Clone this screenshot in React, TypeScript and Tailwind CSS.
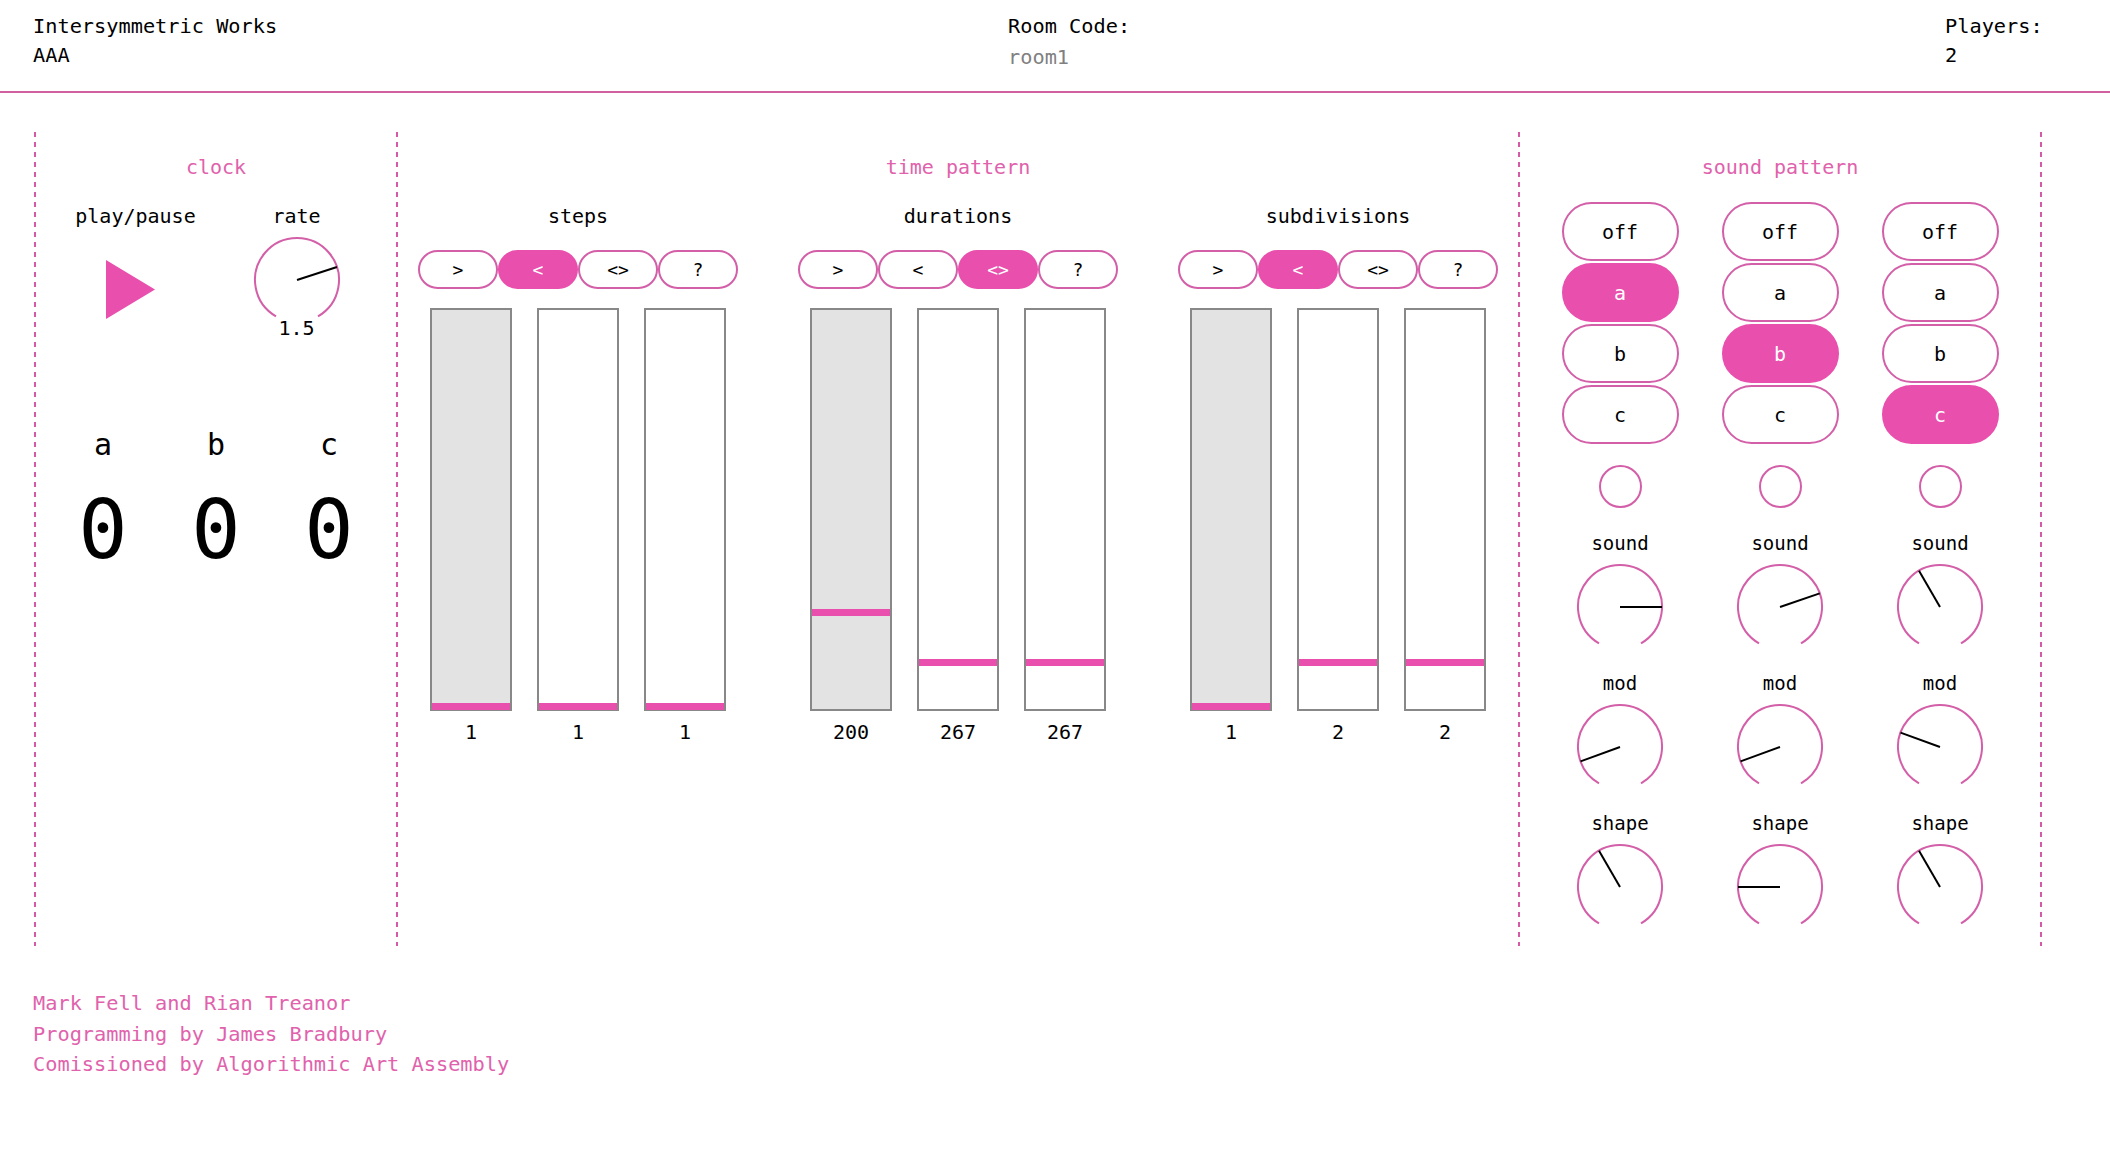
import React from "react";

const STROKE = "#d35fa8";

function Knob({ angle, size = 90, r = 42 }: { angle: number; size?: number; r?: number }) {
  const c = size / 2;
  const rad = (angle * Math.PI) / 180;
  const x2 = c + r * Math.cos(rad);
  const y2 = c - r * Math.sin(rad);
  const a1 = (120 * Math.PI) / 180;
  const a2 = (60 * Math.PI) / 180;
  const sx = c + r * Math.cos(a1);
  const sy = c + r * Math.sin(a1);
  const ex = c + r * Math.cos(a2);
  const ey = c + r * Math.sin(a2);
  return (
    <svg width={size} height={size} viewBox={`0 0 ${size} ${size}`} className="block">
      <path
        d={`M ${sx} ${sy} A ${r} ${r} 0 1 1 ${ex} ${ey}`}
        fill="none"
        stroke={STROKE}
        strokeWidth={2}
      />
      <line x1={c} y1={c} x2={x2} y2={y2} stroke="#000" strokeWidth={2} />
    </svg>
  );
}

function Divider() {
  return (
    <div className="w-[2px] shrink-0 self-stretch [background-image:repeating-linear-gradient(to_bottom,#d45aa8_0px,#d45aa8_5px,transparent_5px,transparent_10px)]" />
  );
}

function Title({ children }: { children: React.ReactNode }) {
  return <div className="h-[28px] leading-[28px] text-[20px] text-[#e062ac]">{children}</div>;
}

type Group = {
  label: string;
  active: number;
  markers: number[];
  values: string[];
};

const groups: Group[] = [
  { label: "steps", active: 1, markers: [393, 393, 393], values: ["1", "1", "1"] },
  { label: "durations", active: 2, markers: [299, 349, 349], values: ["200", "267", "267"] },
  { label: "subdivisions", active: 1, markers: [393, 349, 349], values: ["1", "2", "2"] },
];

const modes = [">", "<", "<>", "?"];

function PatternGroup({ g }: { g: Group }) {
  return (
    <div className="w-[319px] flex flex-col items-center">
      <div className="h-[28px] leading-[28px] text-[20px] mt-[1px]">{g.label}</div>
      <div className="flex mt-[20px]">
        {modes.map((m, i) => (
          <div
            key={m}
            className={
              i === g.active
                ? "w-[80px] h-[39px] rounded-full border-2 border-[#e94fad] bg-[#e94fad] text-white flex items-center justify-center text-[18px]"
                : "w-[80px] h-[39px] rounded-full border-2 border-[#d35fa8] bg-white text-black flex items-center justify-center text-[18px]"
            }
          >
            {m}
          </div>
        ))}
      </div>
      <div className="flex gap-[25px] mt-[19px]">
        {g.markers.map((top, i) => (
          <div key={i} className="flex flex-col items-center">
            <div
              className={
                i === 0
                  ? "relative w-[82px] h-[403px] border-2 border-[#888888] bg-[#e3e3e3]"
                  : "relative w-[82px] h-[403px] border-2 border-[#888888] bg-white"
              }
            >
              <div className="absolute left-0 right-0 h-[7px] bg-[#e94fad]" style={{ top }} />
            </div>
            <div className="mt-[7px] h-[28px] leading-[28px] text-[20px]">{g.values[i]}</div>
          </div>
        ))}
      </div>
    </div>
  );
}

const soundCols = [
  { active: 1, sound: 0, mod: 200, shape: 120 },
  { active: 2, sound: 19, mod: 200, shape: 180 },
  { active: 3, sound: 120, mod: 160, shape: 120 },
];

const pills = ["off", "a", "b", "c"];

export default function App() {
  return (
    <div className="w-[2110px] min-h-[1174px] bg-white text-black font-['DejaVu_Sans_Mono',monospace]">
      <header className="flex items-start px-[33px] pt-[12px] pb-[19px] border-b-2 border-[#d0609f] text-[20.3px] leading-[29px]">
        <div className="w-[975px]">
          <div>Intersymmetric Works</div>
          <div>AAA</div>
        </div>
        <div className="w-[937px]">
          <div>Room Code:</div>
          <div className="text-[#808080] mt-[2px]">room1</div>
        </div>
        <div>
          <div>Players:</div>
          <div>2</div>
        </div>
      </header>

      <div className="flex ml-[34px] mt-[39px] h-[814px]">
        <Divider />
        {/* clock */}
        <div className="w-[360px] flex flex-col items-center pt-[21px]">
          <Title>clock</Title>
          <div className="flex mt-[21px]">
            <div className="w-[161px] flex flex-col items-center">
              <div className="h-[28px] leading-[28px] text-[20px]">play/pause</div>
              <svg width="59" height="59" viewBox="0 0 59 59" className="block mt-[30px]">
                <polygon points="0,0 49,29.5 0,59" fill="#e94fad" />
              </svg>
            </div>
            <div className="w-[161px] flex flex-col items-center">
              <div className="h-[28px] leading-[28px] text-[20px]">rate</div>
              <div className="mt-[5px]">
                <Knob angle={18} />
              </div>
              <div className="-mt-[9px] h-[24px] leading-[24px] text-[20px]">1.5</div>
            </div>
          </div>
          <div className="flex mt-[87px]">
            {["a", "b", "c"].map((l) => (
              <div key={l} className="w-[113px] flex flex-col items-center">
                <div className="h-[36px] leading-[36px] text-[30px]">{l}</div>
                <div className="mt-[27px] h-[80px] leading-[80px] text-[82px]">0</div>
              </div>
            ))}
          </div>
        </div>
        <Divider />
        {/* time pattern */}
        <div className="w-[1120px] flex flex-col items-center pt-[21px]">
          <Title>time pattern</Title>
          <div className="flex gap-[61px] mt-[20px]">
            {groups.map((g) => (
              <PatternGroup key={g.label} g={g} />
            ))}
          </div>
        </div>
        <Divider />
        {/* sound pattern */}
        <div className="w-[520px] flex flex-col items-center pt-[21px]">
          <Title>sound pattern</Title>
          <div className="flex mt-[21px]">
            {soundCols.map((col, ci) => (
              <div key={ci} className="w-[160px] flex flex-col items-center">
                <div className="flex flex-col gap-[2px]">
                  {pills.map((p, pi) => (
                    <div
                      key={p}
                      className={
                        pi === col.active
                          ? "w-[117px] h-[59px] rounded-full border-2 border-[#e94fad] bg-[#e94fad] text-white flex items-center justify-center text-[20px]"
                          : "w-[117px] h-[59px] rounded-full border-2 border-[#d35fa8] bg-white text-black flex items-center justify-center text-[20px]"
                      }
                    >
                      {p}
                    </div>
                  ))}
                </div>
                <div className="mt-[21px] w-[43px] h-[43px] rounded-full border-2 border-[#d35fa8]" />
                <div className="mt-[21px] h-[28px] leading-[28px] text-[19px]">sound</div>
                <div className="mt-[5px]">
                  <Knob angle={col.sound} />
                </div>
                <div className="mt-[17px] h-[28px] leading-[28px] text-[19px]">mod</div>
                <div className="mt-[5px]">
                  <Knob angle={col.mod} />
                </div>
                <div className="mt-[17px] h-[28px] leading-[28px] text-[19px]">shape</div>
                <div className="mt-[5px]">
                  <Knob angle={col.shape} />
                </div>
              </div>
            ))}
          </div>
        </div>
        <Divider />
      </div>

      <footer className="mt-[42px] px-[33px] text-[20.3px] leading-[30.5px] text-[#e062ac]">
        <div>Mark Fell and Rian Treanor</div>
        <div>Programming by James Bradbury</div>
        <div>Comissioned by Algorithmic Art Assembly</div>
      </footer>
    </div>
  );
}
